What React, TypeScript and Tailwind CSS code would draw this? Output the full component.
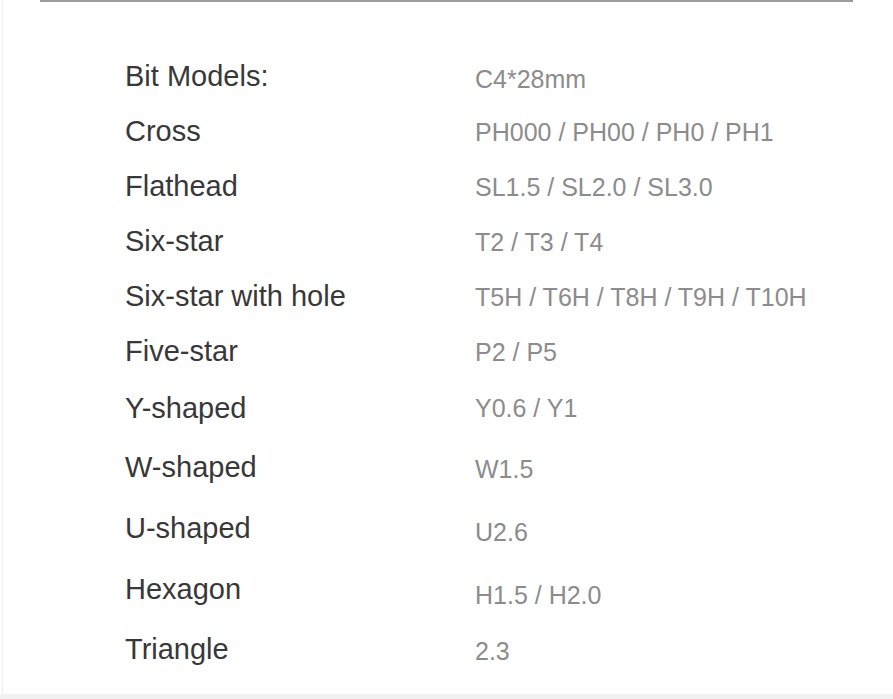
import React from 'react';

interface Row {
  label: string;
  value: string;
  rowClass: string;
  valueClass: string;
}

const rows: Row[] = [
  { label: 'Bit Models:', value: 'C4*28mm', rowClass: 'h-[55px]', valueClass: 'pt-[5px]' },
  { label: 'Cross', value: 'PH000 / PH00 / PH0 / PH1', rowClass: 'h-[55px]', valueClass: 'pt-[1px]' },
  { label: 'Flathead', value: 'SL1.5 / SL2.0 / SL3.0', rowClass: 'h-[55px]', valueClass: 'pt-[1px]' },
  { label: 'Six-star', value: 'T2 / T3 / T4', rowClass: 'h-[55px]', valueClass: 'pt-[1px]' },
  { label: 'Six-star with hole', value: 'T5H / T6H / T8H / T9H / T10H', rowClass: 'h-[55px]', valueClass: 'pt-[1px]' },
  { label: 'Five-star', value: 'P2 / P5', rowClass: 'h-[55px]', valueClass: 'pt-[1px]' },
  { label: 'Y-shaped', value: 'Y0.6 / Y1', rowClass: 'h-[58px]', valueClass: 'pt-[1px]' },
  { label: 'W-shaped', value: 'W1.5', rowClass: 'h-[61px]', valueClass: 'pt-[4px]' },
  { label: 'U-shaped', value: 'U2.6', rowClass: 'h-[61px]', valueClass: 'pt-[8px]' },
  { label: 'Hexagon', value: 'H1.5 / H2.0', rowClass: 'h-[61px]', valueClass: 'pt-[12px]' },
  { label: 'Triangle', value: '2.3', rowClass: 'h-[59px]', valueClass: 'pt-[4px]' },
];

const App = () => {
  return (
    <div className="relative w-[893px] h-[699px] bg-white overflow-hidden font-['Liberation_Sans',Arial,sans-serif]">
      {/* top rule */}
      <div className="mx-[40px] h-[2px] bg-[#9c9c9c] shadow-[0_2px_6px_rgba(0,0,0,0.04)]" />
      <div className="absolute left-[2px] top-0 bottom-0 w-[1px] bg-[#eeeeee]" />

      <div className="pt-[47px]">
        {rows.map((row) => (
          <div key={row.label} className={'flex items-center ' + row.rowClass}>
            <div className="w-[475px] shrink-0 pl-[125px] text-[29px] leading-none text-[#383838] whitespace-nowrap">
              {row.label}
            </div>
            <div
              className={
                'text-[25px] leading-none text-[#8c8c8c] whitespace-nowrap ' +
                row.valueClass
              }>
              {row.value}
            </div>
          </div>
        ))}
      </div>

      {/* bottom band */}
      <div className="absolute left-0 right-0 bottom-0 h-[5px] bg-[#f1f1f1]" />
    </div>
  );
};

export default App;
